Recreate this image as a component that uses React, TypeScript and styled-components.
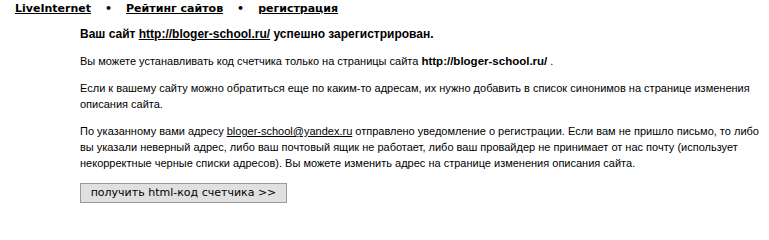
import styled, { createGlobalStyle } from 'styled-components';

const GlobalStyle = createGlobalStyle`
	html, body {
		margin: 0;
		padding: 0;
		background: #fff;
	}
`;

const Page = styled.div`
	width: 769px;
	height: 209px;
	overflow: hidden;
	background: #fff;
	color: #000;
`;

const TopNav = styled.nav`
	display: flex;
	align-items: center;
	gap: 14px;
	padding: 1px 0 0 15px;
	height: 15px;
	font-family: 'DejaVu Sans', Verdana, sans-serif;
	font-size: 11px;
	font-weight: bold;
`;

const NavLink = styled.a`
	color: #000;
	text-decoration: underline;
`;

const Dot = styled.span`
	color: #000;
	font-size: 11px;
`;

const Content = styled.div`
	margin: 0 0 0 80px;
	width: 692px;
	padding-top: 10px;
	font-family: 'Liberation Sans', Arial, sans-serif;
	font-size: 11px;
	line-height: 16px;
`;

const Para = styled.p<{ $bold?: boolean }>`
	margin: 0 0 11px;
	font-weight: ${(p) => (p.$bold ? 'bold' : 'normal')};
	font-size: ${(p) => (p.$bold ? '12px' : '11px')};
`;

const Link = styled.a`
	color: #000;
	text-decoration: underline;
`;

const Strong = styled.b`
	font-weight: bold;
	font-size: 11.5px;
`;

const CodeButton = styled.button`
	display: block;
	width: 207px;
	height: 20px;
	margin-top: 12px;
	padding: 0 0 1px;
	background: #e0e0e0;
	border: 1px solid #9a9a9a;
	border-radius: 0;
	font-family: 'DejaVu Sans', Tahoma, sans-serif;
	font-size: 11px;
	color: #000;
	text-align: center;
`;

export default function App() {
	return (
		<Page>
			<GlobalStyle />
			<TopNav>
				<NavLink href="#">LiveInternet</NavLink>
				<Dot>•</Dot>
				<NavLink href="#">Рейтинг сайтов</NavLink>
				<Dot>•</Dot>
				<NavLink href="#">регистрация</NavLink>
			</TopNav>
			<Content>
				<Para $bold>
					Ваш сайт <Link href="#">http://bloger-school.ru/</Link> успешно зарегистрирован.
				</Para>
				<Para>
					Вы можете устанавливать код счетчика только на страницы сайта <Strong>http://bloger-school.ru/</Strong> .
				</Para>
				<Para>
					Если к вашему сайту можно обратиться еще по каким-то адресам, их нужно добавить в список синонимов на странице изменения описания сайта.
				</Para>
				<Para>
					По указанному вами адресу <Link href="#">bloger-school@yandex.ru</Link> отправлено уведомление о регистрации. Если вам не пришло письмо, то либо вы указали неверный адрес, либо ваш почтовый ящик не работает, либо ваш провайдер не принимает от нас почту (использует некорректные черные списки адресов). Вы можете изменить адрес на странице изменения описания сайта.
				</Para>
				<CodeButton>получить html-код счетчика &gt;&gt;</CodeButton>
			</Content>
		</Page>
	);
}
